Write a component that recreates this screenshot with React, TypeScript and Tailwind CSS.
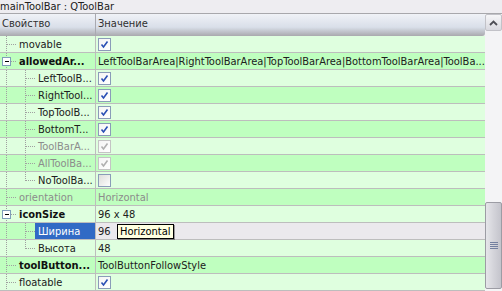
import React from "react";

type Row = {
  name: string;
  level: 0 | 1;
  bold?: boolean;
  gray?: boolean;
  expander?: boolean;
  last?: boolean;
  value?: string;
  check?: "on" | "off" | "dis";
  valueGray?: boolean;
  selected?: boolean;
  tone: "l" | "d";
  childLine?: boolean;
};

const rows: Row[] = [
  { name: "movable", level: 0, check: "on", tone: "l" },
  { name: "allowedAr...", level: 0, bold: true, expander: true, value: "LeftToolBarArea|RightToolBarArea|TopToolBarArea|BottomToolBarArea|ToolBa...", tone: "d" },
  { name: "LeftToolB...", level: 1, check: "on", tone: "l" },
  { name: "RightTool...", level: 1, check: "on", tone: "d" },
  { name: "TopToolB...", level: 1, check: "on", tone: "l" },
  { name: "BottomT...", level: 1, check: "on", tone: "d" },
  { name: "ToolBarA...", level: 1, gray: true, check: "dis", tone: "l" },
  { name: "AllToolBa...", level: 1, gray: true, check: "dis", tone: "d" },
  { name: "NoToolBa...", level: 1, check: "off", last: true, tone: "l" },
  { name: "orientation", level: 0, gray: true, value: "Horizontal", valueGray: true, tone: "d" },
  { name: "iconSize", level: 0, bold: true, expander: true, value: "96 x 48", tone: "l" },
  { name: "Ширина", level: 1, value: "96", selected: true, tone: "d" },
  { name: "Высота", level: 1, value: "48", last: true, tone: "l" },
  { name: "toolButton...", level: 0, bold: true, value: "ToolButtonFollowStyle", tone: "d" },
  { name: "floatable", level: 0, check: "on", tone: "l" },
];

const DOT = "#a0a0a0";

function Branch({ row }: { row: Row }) {
  const w = row.level === 0 ? 17 : 35;
  return (
    <svg width={w} height={16} className="shrink-0" shapeRendering="crispEdges">
      {/* root vertical line */}
      <line x1={6.5} y1={0} x2={6.5} y2={16} stroke={DOT} strokeDasharray="1 1" />
      {row.level === 0 && !row.expander && (
        <line x1={7} y1={8.5} x2={16} y2={8.5} stroke={DOT} strokeDasharray="1 1" />
      )}
      {row.level === 0 && row.expander && (
        <g>
          <line x1={11} y1={8.5} x2={17} y2={8.5} stroke={DOT} strokeDasharray="1 1" />
          <rect x={2.5} y={4.5} width={8} height={8} fill="#ffffff" stroke="#7f9db9" />
          <line x1={4.5} y1={8.5} x2={9} y2={8.5} stroke="#000" />
        </g>
      )}
      {row.level === 1 && (
        <g>
          <line x1={25.5} y1={0} x2={25.5} y2={row.last ? 9 : 16} stroke={DOT} strokeDasharray="1 1" />
          <line x1={26} y1={8.5} x2={35} y2={8.5} stroke={DOT} strokeDasharray="1 1" />
        </g>
      )}
    </svg>
  );
}

function Check({ state }: { state: "on" | "off" | "dis" }) {
  const border = state === "dis" ? "#c4c4c4" : "#8a9cb8";
  const mark = state === "dis" ? "#b0b0b0" : "#2a4fb4";
  return (
    <svg width={13} height={13} className="shrink-0" shapeRendering="crispEdges">
      <defs>
        <linearGradient id={`cg-${state}`} x1="0" y1="0" x2="1" y2="1">
          <stop offset="0" stopColor={state === "off" ? "#dcdcd8" : "#f4f4f4"} />
          <stop offset="1" stopColor="#ffffff" />
        </linearGradient>
      </defs>
      <rect x={0.5} y={0.5} width={12} height={12} fill={`url(#cg-${state})`} stroke={border} />
      {state !== "off" && (
        <path d="M3.5 6.5 L5.5 9 L9.5 3.5" fill="none" stroke={mark} strokeWidth={1.6} shapeRendering="auto" />
      )}
    </svg>
  );
}

function PropRow({ row }: { row: Row }) {
  const bg = row.tone === "l" ? "bg-[#dfffdf]" : "bg-[#bfffbf]";
  return (
    <div className={`flex h-[17px] border-b border-[#bdbdbd] ${row.selected ? "bg-[#ebe9ed]" : bg}`}>
      <div className={`flex w-[96px] shrink-0 items-center overflow-hidden border-r border-[#bdbdbd] ${row.selected ? bg : ""}`}>
        <Branch row={row} />
        {row.selected ? (
          <div className="flex h-full flex-1 items-center bg-[#316ac5] pl-[3px] text-white">{row.name}</div>
        ) : (
          <span
            className={`whitespace-nowrap ${row.level === 0 ? "pl-[2px]" : "pl-[3px]"} ${row.bold ? "font-bold text-[#101010]" : row.gray ? "text-[#8c8c8c]" : "text-[#202020]"}`}
          >
            {row.name}
          </span>
        )}
      </div>
      <div className="relative flex min-w-0 flex-1 items-center pl-[2px]">
        {row.check ? (
          <Check state={row.check} />
        ) : (
          <span className={`whitespace-nowrap ${row.valueGray ? "text-[#8c8c8c]" : "text-[#202020]"}`}>{row.value}</span>
        )}
        {row.selected && (
          <div className="absolute left-[21px] top-[1px] flex h-[15px] items-center border border-black bg-[#ffffe1] px-[2px] text-black shadow-[1px_1px_0_rgba(0,0,0,0.35)]">
            Horizontal
          </div>
        )}
      </div>
    </div>
  );
}

export default function App() {
  return (
    <div
      className="flex h-[291px] w-[502px] flex-col overflow-hidden bg-[#eeedf1] text-[11px] leading-none"
      style={{ fontFamily: '"DejaVu Sans Condensed", "DejaVu Sans", sans-serif' }}
    >
      <div className="flex h-[13px] shrink-0 items-center whitespace-nowrap text-[#202020]">mainToolBar : QToolBar</div>
      <div className="flex min-h-0 flex-1 border-t border-[#a8a8ac]">
        <div className="flex w-[485px] shrink-0 flex-col">
          <div className="flex h-[22px] shrink-0 rounded-br-[3px] bg-gradient-to-b from-[#f0f2f7] via-[#d9dfe9] via-60% to-[#a9a9ae] text-[#303030]">
            <div className="flex w-[96px] shrink-0 items-center border-r border-[#a9a9b0] pb-[3px] pl-[2px]">Свойство</div>
            <div className="flex flex-1 items-center pb-[3px] pl-[2px]">Значение</div>
          </div>
          {rows.map((r, i) => (
            <PropRow key={i} row={r} />
          ))}
        </div>
        <div className="flex w-[17px] shrink-0 flex-col bg-[#f4f4f6]">
          <div className="flex h-[17px] shrink-0 items-center justify-center rounded-[2px] border border-[#c2c2c8] bg-gradient-to-b from-[#f6f6f8] to-[#d9d9e0]">
            <svg width="9" height="6" viewBox="0 0 9 6">
              <path d="M1 5 L4.5 1.5 L8 5" fill="none" stroke="#4d4d55" strokeWidth="1.8" />
            </svg>
          </div>
          <div className="h-[171px] shrink-0" />
          <div className="flex h-[87px] shrink-0 items-center justify-center rounded-[2px] border border-[#9c9ca4] bg-gradient-to-r from-[#e6e6ea] via-[#d4d4da] to-[#c4c4cc]">
            <svg width="8" height="8" viewBox="0 0 8 8">
              <path d="M0 0.5H8M0 2.5H8M0 4.5H8M0 6.5H8" stroke="#7480a0" strokeWidth="1" />
            </svg>
          </div>
        </div>
      </div>
    </div>
  );
}
